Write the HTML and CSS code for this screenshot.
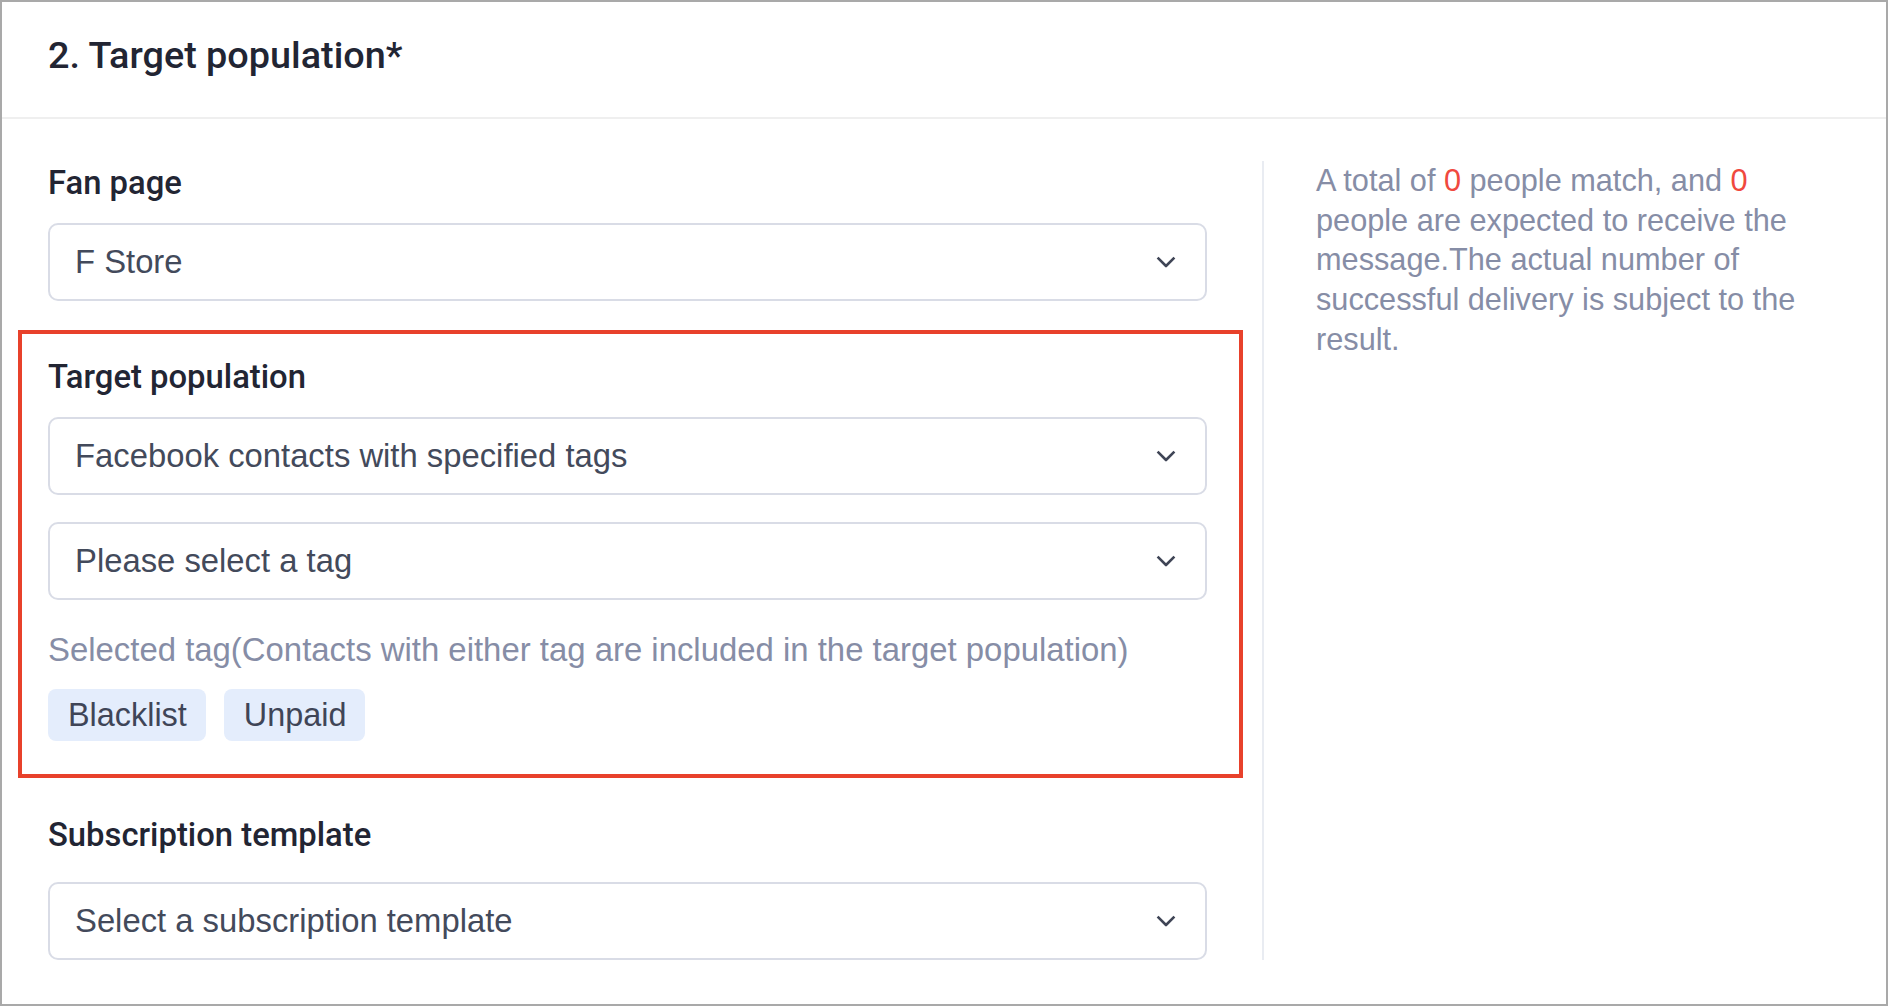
FILE: index.html
```html
<!DOCTYPE html>
<html lang="en">
<head>
<meta charset="utf-8">
<title>Target population</title>
<link rel="stylesheet" href="styles.css">
</head>
<body>
<div class="frame">
  <div class="header">
    <h2 class="title">2. Target population*</h2>
  </div>
  <div class="content">
    <div class="form">
      <div class="field">
        <div class="label">Fan page</div>
        <div class="select">
          <span class="value">F Store</span>
          <svg class="chevron" width="20" height="12" viewBox="0 0 20 12"><polyline points="1.6,1.6 10,10 18.4,1.6" fill="none" stroke="#3f4556" stroke-width="2.6" stroke-linejoin="round"/></svg>
        </div>
      </div>
      <div class="highlight">
        <div class="label">Target population</div>
        <div class="select">
          <span class="value">Facebook contacts with specified tags</span>
          <svg class="chevron" width="20" height="12" viewBox="0 0 20 12"><polyline points="1.6,1.6 10,10 18.4,1.6" fill="none" stroke="#3f4556" stroke-width="2.6" stroke-linejoin="round"/></svg>
        </div>
        <div class="select select-second">
          <span class="value">Please select a tag</span>
          <svg class="chevron" width="20" height="12" viewBox="0 0 20 12"><polyline points="1.6,1.6 10,10 18.4,1.6" fill="none" stroke="#3f4556" stroke-width="2.6" stroke-linejoin="round"/></svg>
        </div>
        <div class="hint">Selected tag(Contacts with either tag are included in the target population)</div>
        <div class="tags">
          <span class="tag">Blacklist</span>
          <span class="tag">Unpaid</span>
        </div>
      </div>
      <div class="field field-last">
        <div class="label">Subscription template</div>
        <div class="select">
          <span class="value">Select a subscription template</span>
          <svg class="chevron" width="20" height="12" viewBox="0 0 20 12"><polyline points="1.6,1.6 10,10 18.4,1.6" fill="none" stroke="#3f4556" stroke-width="2.6" stroke-linejoin="round"/></svg>
        </div>
      </div>
    </div>
    <div class="summary">
      <p class="summary-text">A total of <span class="num">0</span> people match, and <span class="num">0</span> people are expected to receive the message.The actual number of successful delivery is subject to the result.</p>
    </div>
  </div>
</div>
</body>
</html>
```

FILE: styles.css
```css
html, body {
  margin: 0;
  padding: 0;
  background: #ffffff;
}

.frame {
  box-sizing: border-box;
  width: 1888px;
  height: 1006px;
  border: 2px solid #a9a9a9;
  background: #ffffff;
  font-family: "Liberation Sans", Arial, sans-serif;
  display: flex;
  flex-direction: column;
}

.header {
  padding: 28px 46px 37px 46px;
  border-bottom: 2px solid #efefef;
}

.title {
  margin: 0;
  font-family: Roboto, "Liberation Sans", sans-serif;
  font-weight: 500;
  font-size: 37.8px;
  line-height: 50px;
  color: #222533;
}

.content {
  display: flex;
  padding: 42px 48px 44px 46px;
}

.form {
  width: 1159px;
  padding-right: 55px;
  border-right: 2px solid #e9ecf2;
  display: flex;
  flex-direction: column;
}

.label {
  font-family: Roboto, "Liberation Sans", sans-serif;
  font-weight: 500;
  font-size: 32.8px;
  line-height: 44px;
  color: #222533;
  margin-bottom: 18px;
}

.select {
  box-sizing: border-box;
  height: 78px;
  border: 2px solid #d9dce6;
  border-radius: 10px;
  padding: 0 29px 0 25px;
  display: flex;
  align-items: center;
  justify-content: space-between;
}

.value {
  font-size: 32.8px;
  color: #434a5b;
}

.chevron {
  display: block;
  flex: none;
}

.highlight {
  margin: 29px -36px 0 -30px;
  padding: 21px 32px 33px 26px;
  border: 4px solid #e8412b;
}

.select-second {
  margin-top: 27px;
}

.hint {
  margin-top: 30px;
  font-size: 32.9px;
  line-height: 40px;
  color: #868da6;
  white-space: nowrap;
}

.tags {
  margin-top: 19px;
  display: flex;
  gap: 18px;
}

.tag {
  height: 52px;
  padding: 0 19px 0 20px;
  border-radius: 8px;
  background: #e4edfc;
  color: #3f4557;
  font-size: 32.4px;
  display: flex;
  align-items: center;
}

.field-last {
  margin-top: 35px;
}

.field-last .label {
  margin-bottom: 25px;
}

.summary {
  flex: 1;
  padding-left: 52px;
}

.summary-text {
  margin: 0;
  font-size: 30.7px;
  line-height: 39.7px;
  color: #868da6;
}

.num {
  color: #f0493e;
}
```
